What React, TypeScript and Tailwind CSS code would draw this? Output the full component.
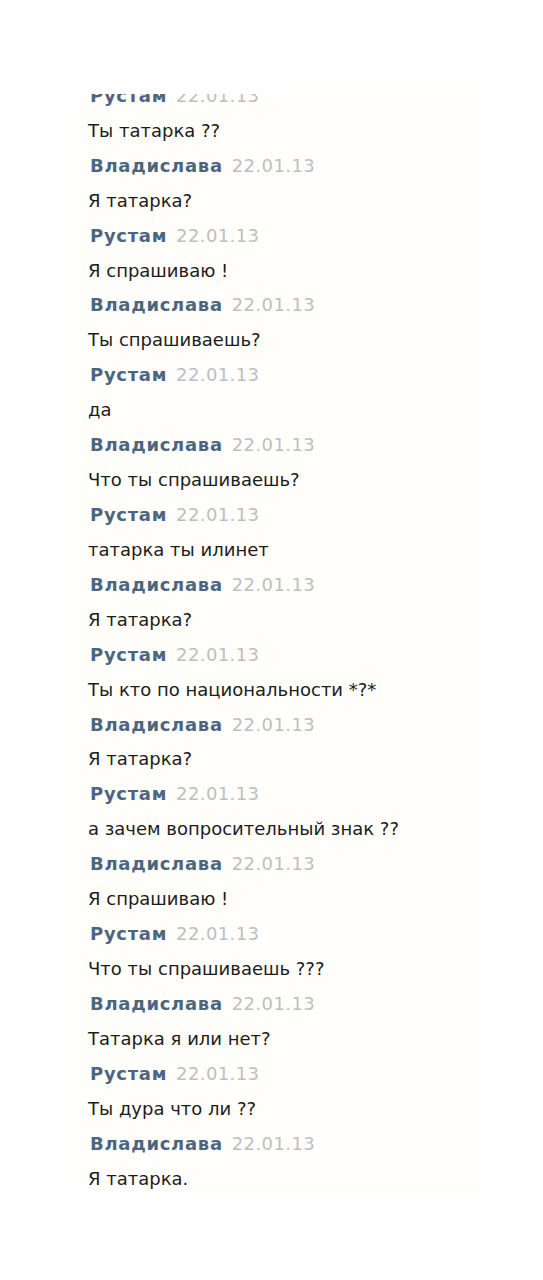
const MSGS = [
  ["Рустам", "Ты татарка ??"],
  ["Владислава", "Я татарка?"],
  ["Рустам", "Я спрашиваю !"],
  ["Владислава", "Ты спрашиваешь?"],
  ["Рустам", "да"],
  ["Владислава", "Что ты спрашиваешь?"],
  ["Рустам", "татарка ты илинет"],
  ["Владислава", "Я татарка?"],
  ["Рустам", "Ты кто по национальности *?*"],
  ["Владислава", "Я татарка?"],
  ["Рустам", "а зачем вопросительный знак ??"],
  ["Владислава", "Я спрашиваю !"],
  ["Рустам", "Что ты спрашиваешь ???"],
  ["Владислава", "Татарка я или нет?"],
  ["Рустам", "Ты дура что ли ??"],
  ["Владислава", "Я татарка."],
];

export default function App() {
  return (
    <div className="h-[1280px] w-[543px] bg-white pt-[94px] pl-[78px] font-['DejaVu_Sans',sans-serif]">
      <div className="w-[401px] h-[1097px] overflow-hidden bg-[#fffefa]">
        <div className="-mt-[16px] pl-[10px]">
          {MSGS.map(([name, text], i) => (
            <div key={i}>
              <div className="h-[34.93px] flex items-center gap-[9px] pl-[2px]">
                <span className="text-[18px] font-bold text-[#4d6680] tracking-[0.7px]">{name}</span>
                <span className="text-[18px] text-[#bcbfc2] tracking-[0.4px]">22.01.13</span>
              </div>
              <div className="h-[34.93px] flex items-center text-[18px] text-[#1c1c1c]">{text}</div>
            </div>
          ))}
        </div>
      </div>
    </div>
  );
}
